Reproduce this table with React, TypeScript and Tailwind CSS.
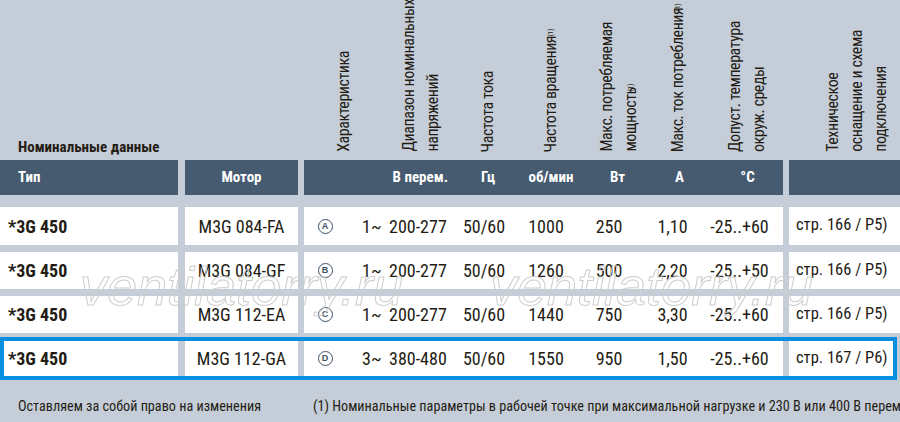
import React from "react";

const FONT = "font-['Roboto_Condensed','Liberation_Sans_Narrow','DejaVu_Sans_Condensed',sans-serif]";

type RowData = {
  type: string;
  motor: string;
  letter: string;
  phase: string;
  volt: string;
  hz: string;
  rpm: string;
  w: string;
  a: string;
  temp: string;
  page: string;
};

const rows: RowData[] = [
  { type: "*3G 450", motor: "M3G 084-FA", letter: "A", phase: "1~", volt: "200-277", hz: "50/60", rpm: "1000", w: "250", a: "1,10", temp: "-25..+60", page: "стр. 166 / P5)" },
  { type: "*3G 450", motor: "M3G 084-GF", letter: "B", phase: "1~", volt: "200-277", hz: "50/60", rpm: "1260", w: "500", a: "2,20", temp: "-25..+50", page: "стр. 166 / P5)" },
  { type: "*3G 450", motor: "M3G 112-EA", letter: "C", phase: "1~", volt: "200-277", hz: "50/60", rpm: "1440", w: "750", a: "3,30", temp: "-25..+60", page: "стр. 166 / P5)" },
  { type: "*3G 450", motor: "M3G 112-GA", letter: "D", phase: "3~", volt: "380-480", hz: "50/60", rpm: "1550", w: "950", a: "1,50", temp: "-25..+60", page: "стр. 167 / P6)" },
];

function Circle({ l }: { l: string }) {
  return (
    <span className="inline-flex w-[15px] h-[15px] rounded-full border-[1.5px] border-[#3d5069] items-center justify-center text-[9px] font-bold leading-none text-[#3d5069] font-['Liberation_Sans',sans-serif]">
      {l}
    </span>
  );
}

function Vert({ children }: { children: React.ReactNode }) {
  return (
    <div className="[writing-mode:vertical-rl] rotate-180 text-[16px] tracking-[-0.45px] leading-[24px] whitespace-nowrap text-[#241c14]">
      {children}
    </div>
  );
}

function MainCells({ r }: { r: RowData }) {
  return (
    <div className="w-[479px] ml-[6px] bg-white flex items-center text-[18px] text-[#241c14] whitespace-nowrap">
      <div className="w-[42px] flex justify-center"><Circle l={r.letter} /></div>
      <div className="w-[112px] pl-[16px] flex">
        <span className="w-[27px]">{r.phase}</span>
        <span>{r.volt}</span>
      </div>
      <div className="w-[52px] text-center">{r.hz}</div>
      <div className="w-[72px] text-center">{r.rpm}</div>
      <div className="w-[54px] text-center">{r.w}</div>
      <div className="w-[73px] text-center">{r.a}</div>
      <div className="w-[61px] text-center">{r.temp}</div>
    </div>
  );
}

function DataRow({ r, first }: { r: RowData; first?: boolean }) {
  return (
    <div className="flex h-full whitespace-nowrap">
      <div className="w-[178px] bg-white flex items-center pl-[8px] text-[18px] font-bold text-[#241c14]">{r.type}</div>
      <div className="w-[113px] ml-[7px] bg-white flex items-center justify-center text-[18px] text-[#241c14]">{r.motor}</div>
      <MainCells r={r} />
      <div className={`flex-1 ml-[6px] bg-white flex pl-[7px] text-[16.5px] text-[#241c14] ${first ? "items-start pt-[6px]" : "items-center"}`}>
        {r.page}
      </div>
    </div>
  );
}

export default function App() {
  return (
    <div className={`relative w-[900px] h-[422px] overflow-hidden bg-[#c5ced8] ${FONT}`}>
      {/* vertical header */}
      <div className="flex h-[152px] items-end">
        <div className="w-[304px] pl-[18px] text-[15px] font-bold leading-none text-[#241c14] mb-[-3px]">Номинальные данные</div>
        <div className="w-[80px] flex justify-center"><Vert>Характеристика</Vert></div>
        <div className="w-[74px] flex justify-center"><Vert>Диапазон номинальных<br />напряжений</Vert></div>
        <div className="w-[59px] flex justify-center"><Vert>Частота тока</Vert></div>
        <div className="w-[68px] flex justify-center"><Vert>Частота вращения <sup className="text-[8px]">(1)</sup></Vert></div>
        <div className="w-[67px] flex justify-center"><Vert>Макс. потребляемая<br />мощность<sup className="text-[8px]">(1)</sup></Vert></div>
        <div className="w-[52px] flex justify-center"><Vert>Макс. ток потребления<sup className="text-[8px]">(1)</sup></Vert></div>
        <div className="w-[85px] flex justify-center"><Vert>Допуст. температура<br />окруж. среды</Vert></div>
        <div className="flex-1 pl-[32px]"><Vert>Техническое<br />оснащение и схема<br />подключения</Vert></div>
      </div>

      {/* header bar */}
      <div className="flex h-[35px] mt-[8px] text-white text-[15px] font-bold">
        <div className="w-[178px] bg-[#465a70] flex items-center pl-[18px]">Тип</div>
        <div className="w-[113px] ml-[7px] bg-[#465a70] flex items-center justify-center">Мотор</div>
        <div className="w-[479px] ml-[6px] bg-[#465a70] flex items-center">
          <div className="w-[154px] text-right pr-[10px]">В перем.</div>
          <div className="w-[60px] text-center">Гц</div>
          <div className="w-[66px] text-center">об/мин</div>
          <div className="w-[67px] text-center">Вт</div>
          <div className="w-[57px] text-center">А</div>
          <div className="w-[75px] text-center pl-[4px]">°C</div>
        </div>
        <div className="flex-1 ml-[6px] bg-[#465a70]"></div>
      </div>

      {/* rows */}
      <div className="mt-[12px] h-[38px]"><DataRow r={rows[0]} first /></div>
      <div className="mt-[7px] h-[37px]"><DataRow r={rows[1]} /></div>
      <div className="mt-[7px] h-[37px]"><DataRow r={rows[2]} /></div>
      <div className="mt-[4px] h-[43px] w-[897px] border-4 border-[#0a8ee0]">
        <div className="flex h-full whitespace-nowrap">
          <div className="w-[174px] bg-white flex items-center pl-[4px] text-[18px] font-bold text-[#241c14]">{rows[3].type}</div>
          <div className="w-[113px] ml-[7px] bg-white flex items-center justify-center text-[18px] text-[#241c14]">{rows[3].motor}</div>
          <MainCells r={rows[3]} />
          <div className="flex-1 ml-[6px] bg-white flex items-center pl-[7px] text-[16.5px] text-[#241c14]">{rows[3].page}</div>
        </div>
      </div>

      {/* footer */}
      <div className="flex mt-[16px] text-[14.2px] text-[#241c14] whitespace-nowrap">
        <div className="w-[313px] pl-[18px] shrink-0">Оставляем за собой право на изменения</div>
        <div className="shrink-0">(1) Номинальные параметры в рабочей точке при максимальной нагрузке и 230 В или 400 В перем. тока</div>
      </div>

      {/* watermark */}
      <div className="absolute left-[80px] top-[259px] text-[54px] leading-none italic font-['Liberation_Sans',sans-serif] text-transparent [-webkit-text-stroke:1px_#cdcdcd] pointer-events-none">ventilatorry.ru</div>
      <div className="absolute left-[490px] top-[259px] text-[54px] leading-none italic font-['Liberation_Sans',sans-serif] text-transparent [-webkit-text-stroke:1px_#cdcdcd] pointer-events-none">ventilatorry.ru</div>
    </div>
  );
}
